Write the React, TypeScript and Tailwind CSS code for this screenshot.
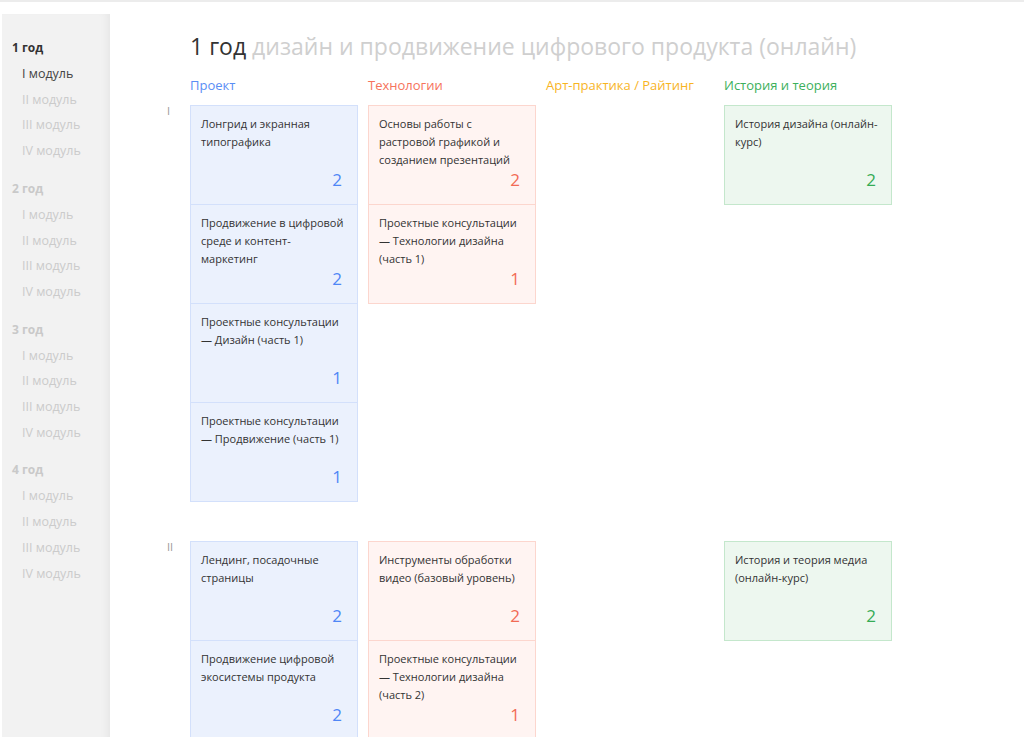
import React from "react";

type Course = { title: string; credits: number };
type Section = { label: string; cols: Course[][] };

const palette = [
  { card: "bg-[#ebf1fd] border-[#d3e0fb]", num: "text-[#4f87f6]" },
  { card: "bg-[#fff4f2] border-[#fcd6ce]", num: "text-[#f26b55]" },
  { card: "bg-[#fff8e6] border-[#fbe3a6]", num: "text-[#f5b223]" },
  { card: "bg-[#edf7ef] border-[#c4e7cc]", num: "text-[#35ac55]" },
];

const headers = [
  { name: "Проект", cls: "text-[#5a8ef5]" },
  { name: "Технологии", cls: "text-[#f6735c]" },
  { name: "Арт-практика / Райтинг", cls: "text-[#f8b41f]" },
  { name: "История и теория", cls: "text-[#3cb05c]" },
];

const sections: Section[] = [
  {
    label: "I",
    cols: [
      [
        { title: "Лонгрид и экранная типографика", credits: 2 },
        { title: "Продвижение в цифровой среде и контент-маркетинг", credits: 2 },
        { title: "Проектные консультации — Дизайн (часть 1)", credits: 1 },
        { title: "Проектные консультации — Продвижение (часть 1)", credits: 1 },
      ],
      [
        { title: "Основы работы с растровой графикой и созданием презентаций", credits: 2 },
        { title: "Проектные консультации — Технологии дизайна (часть 1)", credits: 1 },
      ],
      [],
      [{ title: "История дизайна (онлайн-курс)", credits: 2 }],
    ],
  },
  {
    label: "II",
    cols: [
      [
        { title: "Лендинг, посадочные страницы", credits: 2 },
        { title: "Продвижение цифровой экосистемы продукта", credits: 2 },
      ],
      [
        { title: "Инструменты обработки видео (базовый уровень)", credits: 2 },
        { title: "Проектные консультации — Технологии дизайна (часть 2)", credits: 1 },
      ],
      [],
      [{ title: "История и теория медиа (онлайн-курс)", credits: 2 }],
    ],
  },
];

const years = ["1 год", "2 год", "3 год", "4 год"];
const modules = ["I модуль", "II модуль", "III модуль", "IV модуль"];

function Card({ course, col, first }: { course: Course; col: number; first: boolean }) {
  const p = palette[col];
  return (
    <div
      className={`flex h-[100px] flex-col justify-between border pl-[10px] pt-[9px] pb-[14px] ${p.card} ${
        first ? "" : "-mt-px"
      }`}
    >
      <div className="w-[146px] text-[11px] leading-[18px] text-[#333]">{course.title}</div>
      <div className={`pr-[15px] text-right text-[17px] leading-[20px] ${p.num}`}>{course.credits}</div>
    </div>
  );
}

export default function App() {
  return (
    <div
      className="flex min-h-[737px] border-t-2 border-[#ececec] bg-white"
      style={{ fontFamily: '"Open Sans", "Noto Sans", sans-serif' }}
    >
      <aside className="ml-[2px] mt-[12px] w-[108px] shrink-0 bg-[#f2f2f2] pt-[21px] shadow-[inset_-8px_0_10px_-6px_rgba(0,0,0,0.06)]">
        {years.map((y, yi) => (
          <div key={y} className="mb-[12px]">
            <div
              className={`pl-[10px] text-[12px] font-bold leading-[26px] ${
                yi === 0 ? "text-[#333]" : "text-[#c9c9c9]"
              }`}
            >
              {y}
            </div>
            {modules.map((m, mi) => (
              <div
                key={m}
                className={`pl-[20px] text-[12.5px] leading-[25.7px] ${
                  yi === 0 && mi === 0 ? "text-[#444]" : "text-[#cbcbcb]"
                }`}
              >
                {m}
              </div>
            ))}
          </div>
        ))}
      </aside>

      <main className="flex-1 pl-[57px] pt-[29px]">
        <h1 className="pl-[23px] text-[23px] font-normal leading-[30px]">
          <span className="text-[#333]">1 год</span>{" "}
          <span className="text-[#cfcfcf]">дизайн и продвижение цифрового продукта (онлайн)</span>
        </h1>

        <div className="mt-[14px] flex">
          <div className="w-[23px]" />
          <div className="grid grid-cols-[168px_168px_168px_168px] gap-x-[10px]">
            {headers.map((h) => (
              <div key={h.name} className={`text-[13px] leading-[20px] ${h.cls}`}>
                {h.name}
              </div>
            ))}
          </div>
        </div>

        {sections.map((s, si) => (
          <div key={s.label} className={`flex ${si === 0 ? "mt-[10px]" : "mt-[39px]"}`}>
            <div className="w-[23px] text-[11px] leading-[12px] text-[#999]">{s.label}</div>
            <div className="grid grid-cols-[168px_168px_168px_168px] items-start gap-x-[10px]">
              {s.cols.map((col, ci) => (
                <div key={ci} className="flex flex-col">
                  {col.map((c, i) => (
                    <Card key={c.title} course={c} col={ci} first={i === 0} />
                  ))}
                </div>
              ))}
            </div>
          </div>
        ))}
      </main>
    </div>
  );
}
